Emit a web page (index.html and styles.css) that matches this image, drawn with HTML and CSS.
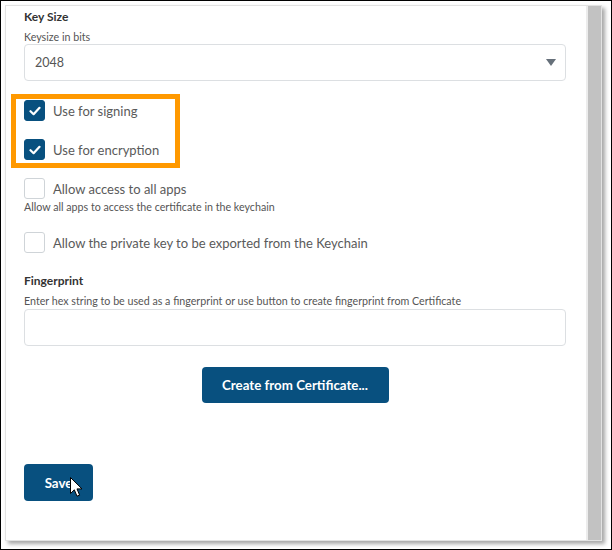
FILE: index.html
```html
<!DOCTYPE html>
<html lang="en">
<head>
    <meta charset="UTF-8">
    <title>Certificate Settings</title>
    <link rel="stylesheet" href="styles.css">
</head>
<body>
    <div class="panel">
        <div class="content">
            <div class="label">Key Size</div>
            <div class="hint">Keysize in bits</div>
            <div class="select">
                <span>2048</span>
                <span class="arrow"></span>
            </div>

            <div class="highlight">
                <div class="check-row">
                    <span class="box checked"><svg width="12" height="10" viewBox="0 0 12 10"><path d="M1.5 5.2 L4.6 8.2 L10.5 1.8" fill="none" stroke="#fff" stroke-width="2.2" stroke-linecap="round" stroke-linejoin="round"/></svg></span>
                    <span class="check-text">Use for signing</span>
                </div>
                <div class="check-row last">
                    <span class="box checked"><svg width="12" height="10" viewBox="0 0 12 10"><path d="M1.5 5.2 L4.6 8.2 L10.5 1.8" fill="none" stroke="#fff" stroke-width="2.2" stroke-linecap="round" stroke-linejoin="round"/></svg></span>
                    <span class="check-text">Use for encryption</span>
                </div>
            </div>

            <div class="check-row plain">
                <span class="box"></span>
                <span class="check-text">Allow access to all apps</span>
            </div>
            <div class="hint small">Allow all apps to access the certificate in the keychain</div>

            <div class="check-row plain second">
                <span class="box"></span>
                <span class="check-text">Allow the private key to be exported from the Keychain</span>
            </div>

            <div class="label fp">Fingerprint</div>
            <div class="hint">Enter hex string to be used as a fingerprint or use button to create fingerprint from Certificate</div>
            <div class="input"></div>

            <div class="center">
                <button type="button" class="btn wide">Create from Certificate...</button>
            </div>

            <div class="save-wrap">
                <button type="button" class="btn save">Save</button>
                <svg class="cursor" width="13" height="21" viewBox="0 0 13 21"><path d="M0.5 0.5 L0.5 16.5 L4.3 12.8 L7 19.2 L9.6 18.1 L7 11.9 L12 11.9 Z" fill="#fff" stroke="#000" stroke-width="1" stroke-linejoin="miter"/></svg>
            </div>
        </div>
        <div class="scrollbar"></div>
    </div>
</body>
</html>
```

FILE: styles.css
```css
html, body {
    margin: 0;
    padding: 0;
}
body {
    width: 612px;
    height: 550px;
    box-sizing: border-box;
    border: 1px solid #000;
    background: #fff;
    font-family: Lato, "Open Sans", sans-serif;
    color: #555;
    overflow: hidden;
}
.panel {
    display: flex;
    margin: 4px 0 0 4px;
    width: 597px;
    height: 536px;
    box-sizing: border-box;
    border: 1px solid #e2e2e2;
    background: #fff;
    box-shadow: 3px 3px 4px rgba(0, 0, 0, 0.35);
}
.content {
    flex: 1;
    padding: 3px 20px 0 18px;
}
.scrollbar {
    width: 13px;
    background: #c2c2c2;
    border-left: 2px solid #ececec;
}
.label {
    font-size: 12px;
    font-weight: bold;
    color: #333;
    line-height: 16px;
}
.hint {
    font-size: 10.7px;
    line-height: 14px;
    color: #555;
    margin-top: 5px;
}
.hint.small {
    margin-top: 1px;
}
.select, .input {
    height: 37px;
    box-sizing: border-box;
    border: 1px solid #dcdfe2;
    border-radius: 4px;
}
.select {
    display: flex;
    align-items: center;
    justify-content: space-between;
    padding: 0 9px 0 10px;
    font-size: 12.5px;
    color: #555;
}
.arrow {
    width: 0;
    height: 0;
    border-left: 5px solid transparent;
    border-right: 5px solid transparent;
    border-top: 7px solid #66707a;
}
.highlight {
    margin: 13px 0 0 -13px;
    width: 169px;
    box-sizing: border-box;
    border: 5px solid #ff9900;
    padding: 1px 0 3px 8px;
}
.check-row {
    display: flex;
    align-items: center;
    margin-bottom: 18px;
}
.check-row.last {
    margin-bottom: 0;
}
.check-row.plain {
    margin: 10px 0 0 0;
}
.check-row.second {
    margin-top: 18px;
}
.box {
    width: 21px;
    height: 21px;
    box-sizing: border-box;
    border: 1px solid #cfd4d8;
    border-radius: 3px;
    display: flex;
    align-items: center;
    justify-content: center;
}
.box.checked {
    background: #08507f;
    border-color: #08507f;
}
.check-text {
    margin-left: 8px;
    font-size: 13px;
    color: #5a5a5a;
}
.label.fp {
    margin-top: 20px;
}
.input {
    margin-top: 1px;
}
.center {
    text-align: center;
    margin-top: 21px;
}
.btn {
    background: #08507f;
    color: #fff;
    border: none;
    border-radius: 4px;
    font-family: Lato, "Open Sans", sans-serif;
    font-weight: bold;
    font-size: 13.3px;
    height: 36px;
    padding: 0;
}
.btn.wide {
    width: 187px;
}
.save-wrap {
    position: relative;
    margin-top: 61px;
}
.btn.save {
    width: 69px;
    height: 37px;
}
.cursor {
    position: absolute;
    left: 46px;
    top: 13px;
}
```
